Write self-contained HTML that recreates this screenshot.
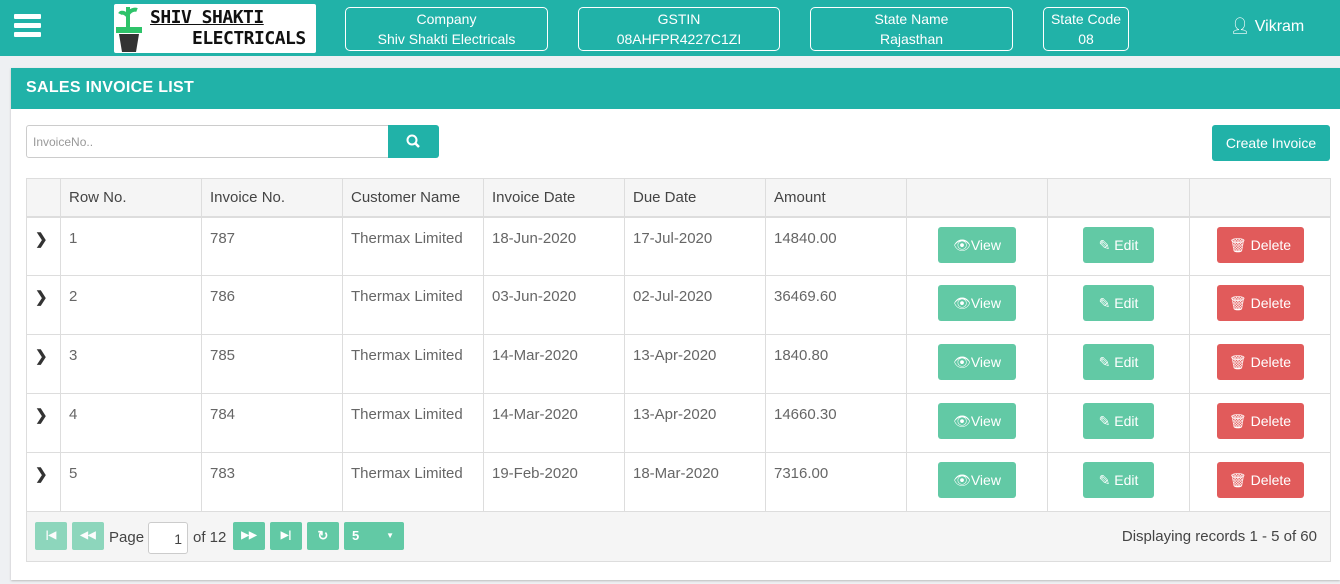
<!DOCTYPE html>
<html><head><style>
*{box-sizing:border-box;margin:0;padding:0}
body{width:1340px;height:584px;background:#eef0f3;font-family:"Liberation Sans",sans-serif;position:relative;overflow:hidden;color:#555}
.hdr{position:absolute;left:0;top:0;width:1340px;height:56px;background:#21b2a8}
.ham{position:absolute;left:14px;top:14px;width:27px}
.ham div{height:5px;background:#fff;margin-bottom:4px;border-radius:1px}
.logo{position:absolute;left:114px;top:4px;width:202px;height:49px;background:#fff;border-radius:2px}
.box{position:absolute;top:7px;height:44px;border:1px solid #fff;border-radius:5px;color:#fff;text-align:center;font-size:14px;line-height:20px;padding-top:1px}
.user{position:absolute;left:1230px;top:16px;color:#fff;font-size:16px}
.card{position:absolute;left:11px;top:68px;width:1329px;height:512px;background:#fff;box-shadow:0 1px 2px #bbb}
.ch{height:41px;background:#21b2a8;color:#fff;font-weight:bold;font-size:16px;padding:11px 15px;letter-spacing:.3px}
.inp{position:absolute;left:15px;top:57px;width:363px;height:33px;border:1px solid #ccc;border-radius:3px 0 0 3px;font-size:12px;color:#999;padding:9px 6px}
.sb{position:absolute;left:377px;top:57px;width:51px;height:33px;background:#21b2a8;border-radius:0 3px 3px 0}
.cr{position:absolute;left:1201px;top:57px;width:118px;height:36px;background:#21b2a8;border-radius:3px;color:#fff;font-size:14px;text-align:center;line-height:36px}
table{position:absolute;left:15px;top:110px;width:1305px;border-collapse:collapse;font-size:15px}
td,th{border:1px solid #ddd;text-align:left;font-weight:normal;padding:0 8px;vertical-align:top}
th{height:38px;background:#f5f5f5;color:#444;vertical-align:middle;border-bottom:2px solid #ddd}
td{height:59px;padding-top:12px;color:#666}
.b{display:inline-block;color:#fff;font-size:14px;height:36px;line-height:36px;border-radius:3px;text-align:center;margin-top:-3px}
.v{background:#62c9a5;width:78px}.e{background:#62c9a5;width:71px}.d{background:#e15b5b;width:87px}
.ft{position:absolute;left:15px;top:444px;width:1305px;height:50px;background:#f5f5f5;border:1px solid #ddd;border-top:none}
.pb{position:absolute;top:10px;width:32px;height:28px;background:#62c9a5;border-radius:2px;color:#fff;font-size:10px;text-align:center;line-height:28px;font-weight:bold}
</style></head><body>
<div class="hdr">
<div class="ham"><div></div><div></div><div></div></div>
<div class="logo">
<svg width="202" height="49" style="position:absolute;left:0;top:0"><path d="M14 3v20M14 12c-6-6-8-2-8-2M14 10c4-6 9-4 9-4" stroke="#2ec36a" stroke-width="4" fill="none"/><rect x="2" y="23" width="26" height="6" fill="#2ec36a"/><path d="M5 30h20l-3 18H8z" fill="#333"/></svg>
<div style="position:absolute;left:36px;top:3px;font:bold 18px 'DejaVu Sans Mono',monospace;color:#111;text-decoration:underline;letter-spacing:-0.5px">SHIV SHAKTI</div>
<div style="position:absolute;left:78px;top:24px;font:bold 18px 'DejaVu Sans Mono',monospace;color:#111;letter-spacing:-0.5px">ELECTRICALS</div>
</div>
<div class="box" style="left:345px;width:203px">Company<br>Shiv Shakti Electricals</div>
<div class="box" style="left:578px;width:202px">GSTIN<br>08AHFPR4227C1ZI</div>
<div class="box" style="left:810px;width:203px">State Name<br>Rajasthan</div>
<div class="box" style="left:1043px;width:86px">State Code<br>08</div>
<div class="user">&#128100;&#xFE0E; Vikram</div>
</div>
<div class="card">
<div class="ch">SALES INVOICE LIST</div>
<div class="inp">InvoiceNo..</div>
<div class="sb"><svg width="51" height="33"><circle cx="24" cy="15" r="4.5" stroke="#fff" stroke-width="2" fill="none"/><path d="M27 18l4 4" stroke="#fff" stroke-width="2.5"/></svg></div>
<div class="cr">Create Invoice</div>
<table>
<tr><th style="width:34px"></th><th style="width:141px">Row No.</th><th style="width:141px">Invoice No.</th><th style="width:141px">Customer Name</th><th style="width:141px">Invoice Date</th><th style="width:141px">Due Date</th><th style="width:141px">Amount</th><th style="width:141px"></th><th style="width:142px"></th><th></th></tr>
<tr><td><b style="color:#333">&#x276F;</b></td><td>1</td><td>787</td><td>Thermax Limited</td><td>18-Jun-2020</td><td>17-Jul-2020</td><td>14840.00</td><td style="text-align:center"><span class="b v">&#128065;&#xFE0E;View</span></td><td style="text-align:center"><span class="b e">&#9998; Edit</span></td><td style="text-align:center"><span class="b d">&#128465;&#xFE0E; Delete</span></td></tr>
<tr><td><b style="color:#333">&#x276F;</b></td><td>2</td><td>786</td><td>Thermax Limited</td><td>03-Jun-2020</td><td>02-Jul-2020</td><td>36469.60</td><td style="text-align:center"><span class="b v">&#128065;&#xFE0E;View</span></td><td style="text-align:center"><span class="b e">&#9998; Edit</span></td><td style="text-align:center"><span class="b d">&#128465;&#xFE0E; Delete</span></td></tr>
<tr><td><b style="color:#333">&#x276F;</b></td><td>3</td><td>785</td><td>Thermax Limited</td><td>14-Mar-2020</td><td>13-Apr-2020</td><td>1840.80</td><td style="text-align:center"><span class="b v">&#128065;&#xFE0E;View</span></td><td style="text-align:center"><span class="b e">&#9998; Edit</span></td><td style="text-align:center"><span class="b d">&#128465;&#xFE0E; Delete</span></td></tr>
<tr><td><b style="color:#333">&#x276F;</b></td><td>4</td><td>784</td><td>Thermax Limited</td><td>14-Mar-2020</td><td>13-Apr-2020</td><td>14660.30</td><td style="text-align:center"><span class="b v">&#128065;&#xFE0E;View</span></td><td style="text-align:center"><span class="b e">&#9998; Edit</span></td><td style="text-align:center"><span class="b d">&#128465;&#xFE0E; Delete</span></td></tr>
<tr><td><b style="color:#333">&#x276F;</b></td><td>5</td><td>783</td><td>Thermax Limited</td><td>19-Feb-2020</td><td>18-Mar-2020</td><td>7316.00</td><td style="text-align:center"><span class="b v">&#128065;&#xFE0E;View</span></td><td style="text-align:center"><span class="b e">&#9998; Edit</span></td><td style="text-align:center"><span class="b d">&#128465;&#xFE0E; Delete</span></td></tr>
</table>
<div class="ft">
<div class="pb" style="left:8px;opacity:.7">|&#9664;</div>
<div class="pb" style="left:45px;opacity:.7">&#9664;&#9664;</div>
<div style="position:absolute;left:82px;top:17px;font-size:15px;color:#444">Page</div>
<div style="position:absolute;left:121px;top:10px;width:40px;height:32px;background:#fff;border:1px solid #ccc;border-radius:3px;text-align:right;padding:8px 5px;font-size:14px;color:#444">1</div>
<div style="position:absolute;left:166px;top:17px;font-size:15px;color:#444">of 12</div>
<div class="pb" style="left:206px">&#9654;&#9654;</div>
<div class="pb" style="left:243px">&#9654;|</div>
<div class="pb" style="left:280px;font-size:13px">&#8635;</div>
<div class="pb" style="left:317px;width:60px;text-align:left;padding-left:8px;font-size:13px">5 <span style="float:right;margin-right:10px;font-size:8px">&#9660;</span></div>
<div style="position:absolute;right:13px;top:16px;font-size:15px;color:#444">Displaying records 1 - 5 of 60</div>
</div>
</div>
</body></html>
